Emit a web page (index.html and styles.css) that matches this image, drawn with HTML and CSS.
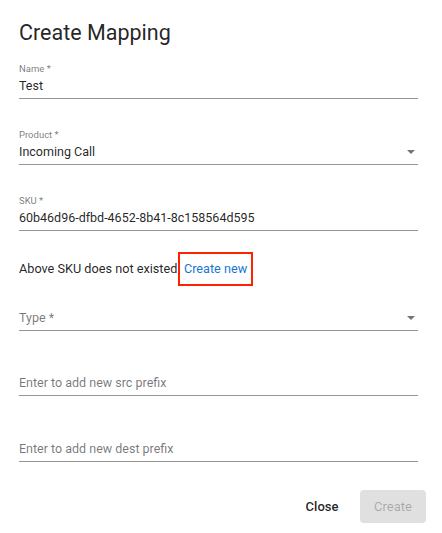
FILE: index.html
```html
<!DOCTYPE html>
<html lang="en">
<head>
<meta charset="utf-8">
<title>Create Mapping</title>
<link rel="stylesheet" href="styles.css">
</head>
<body>
<div class="dialog">
  <h1 class="title">Create Mapping</h1>
  <div class="form">
    <div class="field">
      <div class="label">Name *</div>
      <div class="value">Test</div>
    </div>
    <div class="field">
      <div class="label">Product *</div>
      <div class="value"><span class="text">Incoming Call</span><span class="arrow"></span></div>
    </div>
    <div class="field">
      <div class="label">SKU *</div>
      <div class="value">60b46d96-dfbd-4652-8b41-8c158564d595</div>
    </div>
    <div class="notice">Above SKU does not existed. <a class="link" href="#">Create new</a></div>
    <div class="field field-type">
      <div class="label"></div>
      <div class="value placeholder"><span class="text">Type *</span><span class="arrow"></span></div>
    </div>
    <div class="field field-src">
      <div class="label"></div>
      <div class="value placeholder">Enter to add new src prefix</div>
    </div>
    <div class="field field-dest">
      <div class="label"></div>
      <div class="value placeholder">Enter to add new dest prefix</div>
    </div>
  </div>
  <div class="actions">
    <button class="btn btn-text" type="button">Close</button>
    <button class="btn btn-disabled" type="button" disabled>Create</button>
  </div>
</div>
</body>
</html>
```

FILE: styles.css
```css
html, body {
  margin: 0;
  padding: 0;
  background: #ffffff;
}

body {
  font-family: Roboto, "Noto Sans", "Liberation Sans", sans-serif;
  color: rgba(0, 0, 0, 0.87);
}

.dialog {
  padding: 19px 24px 0 19px;
}

.title {
  margin: 0;
  font-size: 21.5px;
  line-height: 28px;
  font-weight: 400;
  color: rgba(0, 0, 0, 0.87);
}

.form {
  margin-top: 16px;
  display: flex;
  flex-direction: column;
}

.field {
  display: flex;
  flex-direction: column;
  gap: 3px;
  padding-bottom: 4px;
  border-bottom: 1px solid rgba(0, 0, 0, 0.42);
}

.field + .field {
  margin-top: 30px;
}

.label {
  height: 12px;
  font-size: 9.5px;
  line-height: 12px;
  color: rgba(0, 0, 0, 0.54);
}

.value {
  display: flex;
  align-items: center;
  justify-content: space-between;
  height: 16px;
  font-size: 12.5px;
  line-height: 16px;
  color: rgba(0, 0, 0, 0.87);
}

.placeholder {
  color: rgba(0, 0, 0, 0.54);
}

.arrow {
  width: 0;
  height: 0;
  margin-right: 3px;
  border-left: 4.5px solid transparent;
  border-right: 4.5px solid transparent;
  border-top: 4.5px solid rgba(0, 0, 0, 0.54);
}

.notice {
  margin-top: 30px;
  font-size: 12.7px;
  line-height: 16px;
  color: rgba(0, 0, 0, 0.87);
}

.link {
  position: relative;
  color: #1976d2;
  text-decoration: none;
}

.link::after {
  content: "";
  position: absolute;
  left: -6px;
  right: -6px;
  top: -9px;
  bottom: -10px;
  border: 2px solid #ff2200;
}

.field-type {
  margin-top: 18px;
}

.field.field-src {
  margin-top: 29px;
}

.field.field-dest {
  margin-top: 30px;
}

.actions {
  margin-top: 28px;
  display: flex;
  justify-content: flex-end;
  gap: 6px;
  margin-right: -8px;
}

.btn {
  min-width: 64px;
  height: 33px;
  padding: 0 14px;
  border: 0;
  border-radius: 4px;
  font-family: Roboto, "Noto Sans", "Liberation Sans", sans-serif;
  font-size: 13px;
  line-height: 17px;
  font-weight: 500;
  background: transparent;
}

.btn-text {
  color: rgba(0, 0, 0, 0.87);
}

.btn-disabled {
  font-weight: 400;
  width: 66px;
  background: rgba(0, 0, 0, 0.12);
  color: rgba(0, 0, 0, 0.26);
}
```
